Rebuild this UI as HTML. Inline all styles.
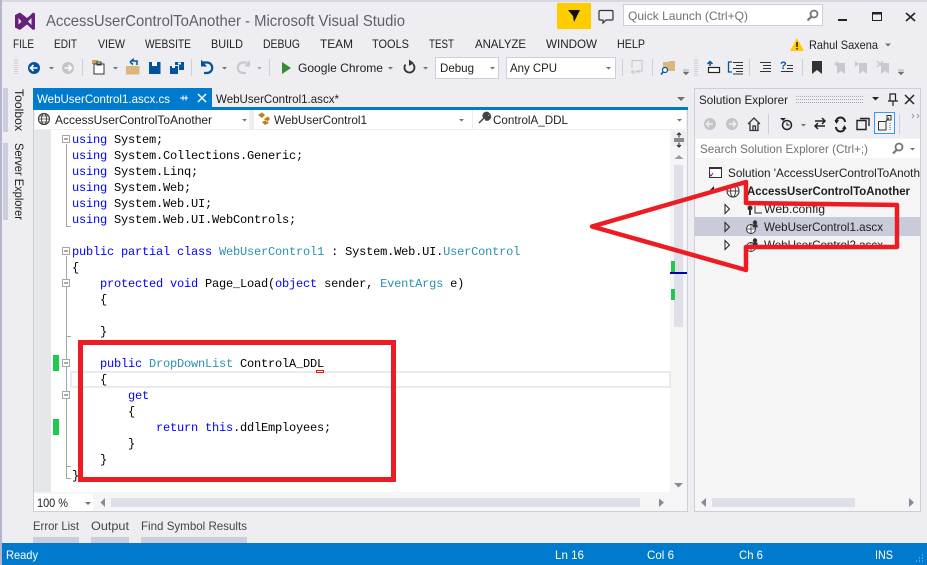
<!DOCTYPE html>
<html><head><meta charset="utf-8"><style>
html,body{margin:0;padding:0;background:#eeeef2;overflow:hidden}
svg{display:block}
text{font-family:"Liberation Sans",sans-serif;fill:#1e1e1e;font-size:12px}
.m text{font-size:12px}
.c text{font-family:"Liberation Mono",monospace;font-size:12px;letter-spacing:-.2px;fill:#000;white-space:pre}
.k{fill:#0000ff}.t{fill:#2b91af}
</style></head><body>
<svg width="927" height="565" viewBox="0 0 927 565" xmlns="http://www.w3.org/2000/svg">
<rect width="927" height="565" fill="#eeeef2"/>
<rect width="927" height="2" fill="#d8d8e2"/>
<rect x="0" y="0" width="2" height="565" fill="#b4b4cc"/>
<!-- logo -->
<path d="M15 15 L20 12.5 L27 18 L29.5 16 L33 12.5 L35 13.5 V29 L33 30 L27 24.5 L20 30 L15 27.5Z M18.5 18 V24.5 L21.5 21.5Z M28 21.5 L31.5 25 V18Z" fill="#68217a" fill-rule="evenodd"/>
<text x="46" y="26" font-size="16" style="font-size:16px;fill:#5e5e6c" textLength="359" lengthAdjust="spacingAndGlyphs">AccessUserControlToAnother - Microsoft Visual Studio</text>
<!-- notification -->
<rect x="557" y="3" width="34" height="26" fill="#ffcc00"/>
<path d="M568 10 H580 L574 22 L573 16Z" fill="#111"/>
<path d="M600 10.500 H612 Q613 10.500 613 12 V19 Q613 20 612 20 H606 L603 23 V20 H600 Q599 20 599 19 V12 Q599 10.500 600 10.500Z" fill="none" stroke="#333" stroke-width="1.200"/>
<rect x="623.500" y="4.500" width="199" height="21" fill="#fff" stroke="#cccedb"/>
<text x="628" y="20" style="fill:#717171" textLength="120" lengthAdjust="spacingAndGlyphs">Quick Launch (Ctrl+Q)</text>
<circle cx="814" cy="14" r="3.500" fill="none" stroke="#777" stroke-width="1.800"/><path d="M811.500 16.500 L807.500 20.500" stroke="#777" stroke-width="2.200"/>
<rect x="838" y="19" width="9" height="2" fill="#222"/>
<rect x="872.500" y="12.500" width="9" height="8" fill="none" stroke="#222"/><rect x="872" y="12" width="10" height="2.500" fill="#222"/>
<path d="M906 13 L915 21 M915 13 L906 21" stroke="#222" stroke-width="1.600"/>
<!-- menu -->
<g class="m">
<text x="13" y="48" textLength="21" lengthAdjust="spacingAndGlyphs">FILE</text>
<text x="54" y="48" textLength="23" lengthAdjust="spacingAndGlyphs">EDIT</text>
<text x="98" y="48" textLength="27" lengthAdjust="spacingAndGlyphs">VIEW</text>
<text x="145" y="48" textLength="46" lengthAdjust="spacingAndGlyphs">WEBSITE</text>
<text x="211" y="48" textLength="32" lengthAdjust="spacingAndGlyphs">BUILD</text>
<text x="263" y="48" textLength="37" lengthAdjust="spacingAndGlyphs">DEBUG</text>
<text x="320" y="48" textLength="33" lengthAdjust="spacingAndGlyphs">TEAM</text>
<text x="372" y="48" textLength="37" lengthAdjust="spacingAndGlyphs">TOOLS</text>
<text x="429" y="48" textLength="25" lengthAdjust="spacingAndGlyphs">TEST</text>
<text x="475" y="48" textLength="51" lengthAdjust="spacingAndGlyphs">ANALYZE</text>
<text x="546" y="48" textLength="51" lengthAdjust="spacingAndGlyphs">WINDOW</text>
<text x="617" y="48" textLength="28" lengthAdjust="spacingAndGlyphs">HELP</text>
</g>
<path d="M797 38 L804 51 H790Z" fill="#ffcc00"/><rect x="796.300" y="42" width="1.500" height="5" fill="#222"/><rect x="796.300" y="48" width="1.500" height="1.500" fill="#222"/>
<text x="809" y="49" textLength="69" lengthAdjust="spacingAndGlyphs">Rahul Saxena</text>
<path d="M885 43.500 H891 L888 46.500Z" fill="#717171"/>
<!-- toolbar -->
<path d="M15 59 v15 M17 59 v15" stroke="#b5b5c0" stroke-dasharray="1 1"/>
<circle cx="34" cy="68" r="6" fill="#00539c"/><path d="M37.500 68 H31 M33.500 65 L30.500 68 L33.500 71" stroke="#fff" stroke-width="1.600" fill="none"/>
<path d="M49 67 H54 L51.500 69.500Z" fill="#717171"/>
<circle cx="68" cy="68" r="6" fill="#c4c4c8"/><path d="M64.500 68 H71 M68.500 65 L71.500 68 L68.500 71" stroke="#fff" stroke-width="1.600" fill="none"/>
<rect x="82" y="59" width="1" height="17" fill="#cccedb"/>
<rect x="92" y="60" width="6" height="4" fill="#c27d1a" opacity=".7"/>
<path d="M94 64 H104 V74 H94Z M97 62 H101 V65 H97Z" fill="#fff" stroke="#333"/>
<path d="M113 67 H118 L115.500 69.500Z" fill="#717171"/>
<path d="M126 66 H139.500 V74.500 H126Z" fill="#dcb67a"/><path d="M130 62 L133 59.500 V61 H137 V65 M130 62 L133 64.500" stroke="#00539c" stroke-width="1.500" fill="none"/>
<path d="M149 62 H160.500 V74 H149Z" fill="#00539c"/><rect x="152" y="62" width="5" height="4" fill="#fff"/>
<path d="M170 66 H178 V74 H170Z M175 62 H184 V70 H179 V65 H175Z" fill="#00539c"/><rect x="172" y="66" width="3" height="2" fill="#fff"/><rect x="178" y="62.500" width="3" height="2" fill="#fff"/>
<rect x="191" y="59" width="1" height="17" fill="#cccedb"/>
<path d="M202 62.500 H207 A5 5 0 0 1 207 73 H204" fill="none" stroke="#00539c" stroke-width="2.200"/><path d="M201 59.500 V66.500 L207 66.500Z" fill="#00539c"/>
<path d="M222 67 H227 L224.500 69.500Z" fill="#717171"/>
<path d="M247 62.500 H243 A5 5 0 0 0 243 73 H246" fill="none" stroke="#c8c8ce" stroke-width="2.200"/><path d="M250 60 V66.500 L244 66.500Z" fill="#c8c8ce"/>
<path d="M257 67 H262 L259.500 69.500Z" fill="#a8a8b0"/>
<rect x="269" y="59" width="1" height="17" fill="#cccedb"/>
<path d="M282 62 L291 68 L282 74Z" fill="#388a34"/>
<text x="298" y="72" textLength="85" lengthAdjust="spacingAndGlyphs">Google Chrome</text>
<path d="M388 67 H393 L390.500 69.500Z" fill="#717171"/>
<path d="M413 64 A5 5 0 1 1 405.500 64.500" fill="none" stroke="#333" stroke-width="1.800"/><path d="M409 59.500 L414 63 L409 66Z" fill="#333"/>
<path d="M423 67 H428 L425.500 69.500Z" fill="#717171"/>
<rect x="435.500" y="57.500" width="63" height="21" fill="#fff" stroke="#cccedb"/>
<text x="440" y="72" textLength="34" lengthAdjust="spacingAndGlyphs">Debug</text>
<path d="M490 67 H495 L492.500 69.500Z" fill="#717171"/>
<rect x="506.500" y="57.500" width="109" height="21" fill="#fff" stroke="#cccedb"/>
<text x="510" y="72" textLength="47" lengthAdjust="spacingAndGlyphs">Any CPU</text>
<path d="M606 67 H611 L608.500 69.500Z" fill="#717171"/>
<rect x="622" y="59" width="1" height="17" fill="#cccedb"/>
<path d="M632 60.500 H642 V71 H636 M632 60.500 V68" fill="none" stroke="#c8c8ce" stroke-width="1.200"/><path d="M631 72 H640 M634 70 L631 72 L634 74" stroke="#c8c8ce" fill="none"/>
<rect x="652" y="59" width="1" height="17" fill="#cccedb"/>
<path d="M663 62 H669 V61 H675 V71 H663Z" fill="#dcb67a"/><circle cx="665" cy="70" r="2.500" fill="#fff" stroke="#00539c" stroke-width="1.200"/><path d="M663 72 L661 74.500" stroke="#00539c" stroke-width="1.500"/>
<path d="M683 72 H689 L686 75Z M683 70 H689" fill="#717171" stroke="#717171" stroke-width=".5"/>
<path d="M695 59 v17 M697 59 v17" stroke="#b5b5c0" stroke-dasharray="1 1"/>
<rect x="708.500" y="67.500" width="11" height="5" fill="#fff" stroke="#222" stroke-width="1.200"/><path d="M710 66 V62 M707.500 64 L710 61.500 L712.500 64" stroke="#00539c" stroke-width="1.500" fill="none"/>
<path d="M732 62 H728.500 V72 H732" stroke="#00539c" stroke-width="1.300" fill="none"/><path d="M733 62.500 H743 M736 65.500 H743 M733 68.500 H743 M736 71.500 H743 M733 74 H743" stroke="#333"/>
<rect x="749" y="59" width="1" height="17" fill="#cccedb"/>
<path d="M760 62.500 H771 M763 65.500 H771 M763 68.500 H771 M760 71.500 H771" stroke="#333"/>
<rect x="802" y="59" width="1" height="17" fill="#cccedb"/>
<text x="780" y="69" style="font-size:11px;font-weight:bold;fill:#00539c">?</text><path d="M787 65.500 H793 M787 68.500 H793 M781 71.500 H793" stroke="#333"/>
<path d="M812 61 H822 V74 L817 70 L812 74Z" fill="#333"/>
<path d="M837 63 H845 V74 L841 71 L837 74Z" fill="#c8c8ce"/><path d="M834 64 L838 61 V67Z" fill="#c8c8ce"/>
<path d="M859 63 H867 V74 L863 71 L859 74Z" fill="#c8c8ce"/><path d="M855 61 L859 64 L855 67Z" fill="#c8c8ce"/>
<path d="M881 63 H889 V74 L885 71 L881 74Z" fill="#c8c8ce"/><path d="M877 61 L883 67 M883 61 L877 67" stroke="#c8c8ce" stroke-width="1.500"/>
<path d="M898 72 H904 L901 75Z M898 70 H904" fill="#717171" stroke="#717171" stroke-width=".5"/>
<!-- left strip -->
<rect x="3" y="88" width="5" height="44" fill="#cccedb"/>
<rect x="3" y="143" width="5" height="77" fill="#cccedb"/>
<text transform="translate(15,89) rotate(90)" textLength="42" lengthAdjust="spacingAndGlyphs">Toolbox</text>
<text transform="translate(15,143) rotate(90)" textLength="77" lengthAdjust="spacingAndGlyphs">Server Explorer</text>
<!-- tabs -->
<rect x="33" y="88" width="179" height="19" fill="#007acc"/>
<text x="37" y="103" style="fill:#fff" textLength="133" lengthAdjust="spacingAndGlyphs">WebUserControl1.ascx.cs</text>
<path d="M180 98 H186 M183 95.500 V100.500 M186 95.500 V100.500 M186 98 H188" stroke="#fff" fill="none"/>
<path d="M198 94 L206 102 M206 94 L198 102" stroke="#fff" stroke-width="1.500"/>
<text x="216" y="103" textLength="123" lengthAdjust="spacingAndGlyphs">WebUserControl1.ascx*</text>
<path d="M677 97 H685 L681 101Z" fill="#717171"/>
<rect x="33" y="107" width="655" height="3" fill="#007acc"/>
<!-- editor frame -->
<rect x="33" y="110" width="655" height="402" fill="#f5f5f5"/>
<rect x="33" y="110" width="1" height="402" fill="#cccedb"/><rect x="687" y="110" width="1" height="402" fill="#cccedb"/><rect x="33" y="511" width="655" height="1" fill="#cccedb"/>
<rect x="34" y="110" width="653" height="20" fill="#eeeef2"/>
<rect x="35" y="110" width="214" height="19" fill="#fff"/>
<rect x="254" y="110" width="218" height="19" fill="#fff"/>
<rect x="473" y="110" width="213" height="19" fill="#fff"/>
<circle cx="44" cy="119" r="5.500" fill="none" stroke="#424242" stroke-width="1.200"/><ellipse cx="44" cy="119" rx="2.500" ry="5.500" fill="none" stroke="#424242"/><path d="M38.500 119 H49.500 M39.500 116 H48.500 M39.500 122 H48.500" stroke="#424242" stroke-width=".8"/>
<text x="55" y="124" textLength="157" lengthAdjust="spacingAndGlyphs">AccessUserControlToAnother</text>
<path d="M242 119 H247 L244.500 121.500Z" fill="#717171"/>
<path d="M258 115 L262 112.500 L265 115 L262 118Z M264 119 L268 116.500 L270 119 L267 122Z M266 120 L262 122 L265 125 L269 123Z" fill="#c27d1a"/>
<text x="274" y="124" textLength="93" lengthAdjust="spacingAndGlyphs">WebUserControl1</text>
<path d="M459 119 H464 L461.500 121.500Z" fill="#717171"/>
<path d="M479 123 L484 118 M484 118 A3 3 0 0 1 489 113.500 L487 116 L489 117 L490 115 A3.500 3.500 0 0 1 485 119.500" fill="#444" stroke="#444" stroke-width="1.500"/>
<text x="493" y="124" textLength="75" lengthAdjust="spacingAndGlyphs">ControlA_DDL</text>
<path d="M677 119 H682 L679.500 121.500Z" fill="#717171"/>
<!-- code area -->
<rect x="34" y="130" width="17" height="362" fill="#e6e7e8"/>
<rect x="51" y="130" width="619" height="362" fill="#fff"/>
<rect x="71" y="372" width="599" height="15" fill="#fff" stroke="#eaeaf2" stroke-width="2"/>
<!-- outline -->
<g fill="none" stroke="#a5a5a5">
<path d="M66.500 144 V226.500 H71"/>
<path d="M66.500 256 V478.500 H71"/>
<path d="M66.500 336.500 H71 M66.500 466.500 H71"/>
<path d="M66.500 288 V300"/>
</g>
<g fill="#fff" stroke="#a5a5a5">
<rect x="62.500" y="135.500" width="7" height="7"/><rect x="62.500" y="247.500" width="7" height="7"/><rect x="62.500" y="279.500" width="7" height="7"/><rect x="62.500" y="359.500" width="7" height="7"/><rect x="62.500" y="391.500" width="7" height="7"/>
</g>
<path d="M64 139 H68 M64 251 H68 M64 283 H68 M64 363 H68 M64 395 H68" stroke="#555"/>
<rect x="53" y="355" width="6" height="16" fill="#1fc84f"/>
<rect x="53" y="419" width="6" height="16" fill="#1fc84f"/>
<!-- code -->
<g class="c">
<text x="72" y="143" xml:space="preserve"><tspan class="k">using</tspan> System;</text>
<text x="72" y="159" xml:space="preserve"><tspan class="k">using</tspan> System.Collections.Generic;</text>
<text x="72" y="175" xml:space="preserve"><tspan class="k">using</tspan> System.Linq;</text>
<text x="72" y="191" xml:space="preserve"><tspan class="k">using</tspan> System.Web;</text>
<text x="72" y="207" xml:space="preserve"><tspan class="k">using</tspan> System.Web.UI;</text>
<text x="72" y="223" xml:space="preserve"><tspan class="k">using</tspan> System.Web.UI.WebControls;</text>
<text x="72" y="255" xml:space="preserve"><tspan class="k">public partial class</tspan> <tspan class="t">WebUserControl1</tspan> : System.Web.UI.<tspan class="t">UserControl</tspan></text>
<text x="72" y="271">{</text>
<text x="100" y="287" xml:space="preserve"><tspan class="k">protected void</tspan> Page_Load(<tspan class="k">object</tspan> sender, <tspan class="t">EventArgs</tspan> e)</text>
<text x="100" y="303">{</text>
<text x="100" y="335">}</text>
<text x="100" y="367" xml:space="preserve"><tspan class="k">public</tspan> <tspan class="t">DropDownList</tspan> ControlA_DDL</text>
<text x="100" y="383">{</text>
<text x="128" y="399" class="k" style="fill:#00f">get</text>
<text x="128" y="415">{</text>
<text x="156" y="431" xml:space="preserve"><tspan class="k">return this</tspan>.ddlEmployees;</text>
<text x="128" y="447">}</text>
<text x="100" y="463">}</text>
<text x="72" y="479">}</text>
</g>
<rect x="316.500" y="370.500" width="7" height="2" fill="#fff" stroke="#e51400"/>
<!-- v scrollbar -->
<rect x="671" y="130" width="16" height="360" fill="#f5f5f5"/>
<rect x="671.500" y="131" width="15" height="15" fill="#eeeef2"/>
<path d="M674 139 H684 M674 141 H684 M679 133 V137.500 M679 142.500 V147 M677 135 L679 133 L681 135 M677 145 L679 147 L681 145" stroke="#222" fill="none"/>
<path d="M674.500 159 L679 155 L683.500 159Z" fill="#9a9cae"/>
<rect x="674" y="165" width="9" height="162" fill="#dedfe8"/>
<rect x="671" y="261" width="4" height="12" fill="#1fc84f"/>
<rect x="671" y="289" width="4" height="11" fill="#1fc84f"/>
<rect x="670" y="272" width="17" height="2" fill="#0000b4"/>
<path d="M674 483 H683 L678.500 487.500Z" fill="#868999"/>
<!-- h scrollbar -->
<rect x="34" y="494" width="59" height="17" fill="#fff"/>
<text x="37" y="507" textLength="31" lengthAdjust="spacingAndGlyphs">100 %</text>
<path d="M85 502 H91 L88 505Z" fill="#717171"/>
<path d="M105 498 L100.500 502.500 L105 507Z" fill="#868999"/>
<rect x="111" y="498" width="529" height="9" fill="#dedfe8"/>
<path d="M659 498.500 L664 502.500 L659 507Z" fill="#868999"/>
<!-- solution explorer -->
<rect x="694.500" y="88.500" width="226" height="423" fill="#f5f5f5" stroke="#cccedb"/>
<rect x="695" y="89" width="225" height="49" fill="#eeeef2"/>
<text x="699" y="104" textLength="89" lengthAdjust="spacingAndGlyphs">Solution Explorer</text>
<path d="M796 96.500 H864 M796 99.500 H864 M796 102.500 H864" stroke="#a8a8b4" stroke-dasharray="1 1"/>
<path d="M872 97 H879 L875.500 100.500Z" fill="#222"/>
<path d="M890 94 H895.500 V101 H890Z M888 101 H898 M893 101 V106" fill="none" stroke="#222" stroke-width="1.200"/>
<path d="M905 95 L914 104 M914 95 L905 104" stroke="#222" stroke-width="1.500"/>
<circle cx="710" cy="124" r="6" fill="#c4c4c8"/><path d="M713 124 H707 M709 121 L706.500 124 L709 127" stroke="#eee" stroke-width="1.500" fill="none"/>
<circle cx="732" cy="124" r="6" fill="#c4c4c8"/><path d="M729 124 H735 M733 121 L735.500 124 L733 127" stroke="#eee" stroke-width="1.500" fill="none"/>
<path d="M748 124 L754 118 L760 124 M750 123 V130.500 H758 V123 M753 130 V126 H755.500 V130" fill="none" stroke="#333" stroke-width="1.300"/>
<rect x="768" y="114" width="1" height="20" fill="#cccedb"/>
<circle cx="787" cy="125" r="4.500" fill="none" stroke="#222" stroke-width="1.500"/><path d="M787 122.500 V125 H789.500" stroke="#222" fill="none"/><path d="M780 118 H786 L783 121Z" fill="#222"/>
<path d="M801 124 H806 L803.500 126.500Z" fill="#717171"/>
<path d="M815 122 H825 M822 119 L825 122 L822 125 M825 127 H815 M818 124 L815 127 L818 130" transform="translate(0,-1)" stroke="#222" stroke-width="1.500" fill="none"/>
<path d="M836 122 A4.500 4.500 0 0 1 845 122 M845 127 A4.500 4.500 0 0 1 836 127" fill="none" stroke="#222" stroke-width="2"/><path d="M834.500 120 L839 120 L836.500 124Z M846.500 129 L842 129 L844.500 125Z" fill="#222"/>
<path d="M857 120.500 H866 V129.500 H857Z M860 118.500 H869 V126" fill="none" stroke="#222" stroke-width="1.400"/>
<rect x="874.500" y="112.500" width="20" height="21" fill="#f5f5f5" stroke="#3399ff"/>
<path d="M878.500 121.500 H886 V130 H878.500Z M886 121 L889 118 M887 115.500 H891 V120 H887Z" fill="none" stroke="#333"/>
<path d="M890 123 v7" stroke="#555" stroke-dasharray="1 1"/>
<rect x="899" y="114" width="1" height="20" fill="#cccedb"/>
<path d="M912 114 l2 2 -2 2 M917 114 l2 2 -2 2" fill="none" stroke="#9a9cae"/>
<rect x="696" y="139" width="224" height="19" fill="#fff"/>
<text x="700" y="153" style="fill:#717171" textLength="168" lengthAdjust="spacingAndGlyphs">Search Solution Explorer (Ctrl+;)</text>
<circle cx="899" cy="147" r="3.500" fill="none" stroke="#777" stroke-width="1.800"/><path d="M896.500 150 L893 153.500" stroke="#777" stroke-width="2.200"/>
<path d="M910 148 H915 L912.500 150.500Z" fill="#717171"/>
<!-- tree -->
<rect x="695" y="217" width="225" height="19" fill="#c9cbd9"/>
<rect x="709.500" y="167.500" width="12" height="10" fill="#fff" stroke="#333"/><rect x="709" y="167" width="13" height="2" fill="#333"/><path d="M709 173 L711 176 L713 173" stroke="#68217a" fill="none"/>
<text x="728" y="177" textLength="192" lengthAdjust="spacingAndGlyphs">Solution 'AccessUserControlToAnoth</text>
<path d="M709 191 L714 191 L714 186Z" fill="#222"/>
<circle cx="733" cy="191" r="6" fill="#fff" stroke="#424242" stroke-width="1.200"/><ellipse cx="733" cy="191" rx="2.500" ry="6" fill="none" stroke="#424242"/><path d="M727 191 H739" stroke="#424242"/>
<text x="747" y="195" style="font-weight:bold" textLength="163" lengthAdjust="spacingAndGlyphs">AccessUserControlToAnother</text>
<path d="M725 204.500 L729.500 209 L725 213.500Z" fill="#f5f5f5" stroke="#222"/>
<circle cx="750" cy="208" r="2.500" fill="#333"/><rect x="749" y="209" width="2" height="6" fill="#333"/><path d="M755 206 V213 H762" fill="none" stroke="#333"/>
<text x="764" y="213" textLength="61" lengthAdjust="spacingAndGlyphs">Web.config</text>
<path d="M725 222.500 L729.500 227 L725 231.500Z" fill="#c9cbd9" stroke="#222"/>
<circle cx="751" cy="229" r="4.500" fill="#fff" stroke="#333"/><path d="M746.500 229 H755.500 M751 224.500 V233.500" stroke="#333" stroke-width=".8"/><circle cx="755" cy="222.500" r="2.200" fill="#333"/><rect x="752.500" y="224.500" width="5" height="3" fill="#333"/>
<text x="764" y="231" textLength="119" lengthAdjust="spacingAndGlyphs">WebUserControl1.ascx</text>
<path d="M725 240.500 L729.500 245 L725 249.500Z" fill="#f5f5f5" stroke="#222"/>
<circle cx="751" cy="247" r="4.500" fill="#fff" stroke="#333"/><path d="M746.500 247 H755.500 M751 242.500 V251.500" stroke="#333" stroke-width=".8"/><circle cx="755" cy="240.500" r="2.200" fill="#333"/><rect x="752.500" y="242.500" width="5" height="3" fill="#333"/>
<text x="764" y="249" textLength="119" lengthAdjust="spacingAndGlyphs">WebUserControl2.ascx</text>
<path d="M706 498 L701 502.500 L706 507Z" fill="#868999"/>
<rect x="712" y="498" width="143" height="9" fill="#dedfe8"/>
<path d="M909 498 L914 502.500 L909 507Z" fill="#868999"/>
<!-- bottom tabs -->
<text x="33" y="530" textLength="46" lengthAdjust="spacingAndGlyphs" style="fill:#444">Error List</text>
<text x="91" y="530" textLength="38" lengthAdjust="spacingAndGlyphs" style="fill:#444">Output</text>
<text x="141" y="530" textLength="106" lengthAdjust="spacingAndGlyphs" style="fill:#444">Find Symbol Results</text>
<rect x="33" y="537" width="46" height="6" fill="#cccedb"/><rect x="91" y="537" width="38" height="6" fill="#cccedb"/><rect x="141" y="537" width="106" height="6" fill="#cccedb"/>
<!-- status -->
<rect x="2" y="543" width="925" height="22" fill="#007acc"/>
<g style="fill:#fff">
<text x="6" y="559" style="fill:#fff" textLength="32" lengthAdjust="spacingAndGlyphs">Ready</text>
<text x="555" y="559" style="fill:#fff" textLength="29" lengthAdjust="spacingAndGlyphs">Ln 16</text>
<text x="647" y="559" style="fill:#fff" textLength="27" lengthAdjust="spacingAndGlyphs">Col 6</text>
<text x="739" y="559" style="fill:#fff" textLength="24" lengthAdjust="spacingAndGlyphs">Ch 6</text>
<text x="875" y="559" style="fill:#fff" textLength="18" lengthAdjust="spacingAndGlyphs">INS</text>
</g>
<path d="M922 555h1M919 558h1M922 558h1M916 561h1M919 561h1M922 561h1" stroke="#a8d4f0" stroke-width="1"/>
<!-- annotations -->
<rect x="80.500" y="342.500" width="313" height="137" fill="none" stroke="#ed1c24" stroke-width="5"/>
<path d="M592 226.500 L746 182 L746 203 L897 205 L897 247 L746 247 L746 270Z" fill="none" stroke="#ed1c24" stroke-width="4.500" stroke-linejoin="round"/>
</svg>
</body></html>
